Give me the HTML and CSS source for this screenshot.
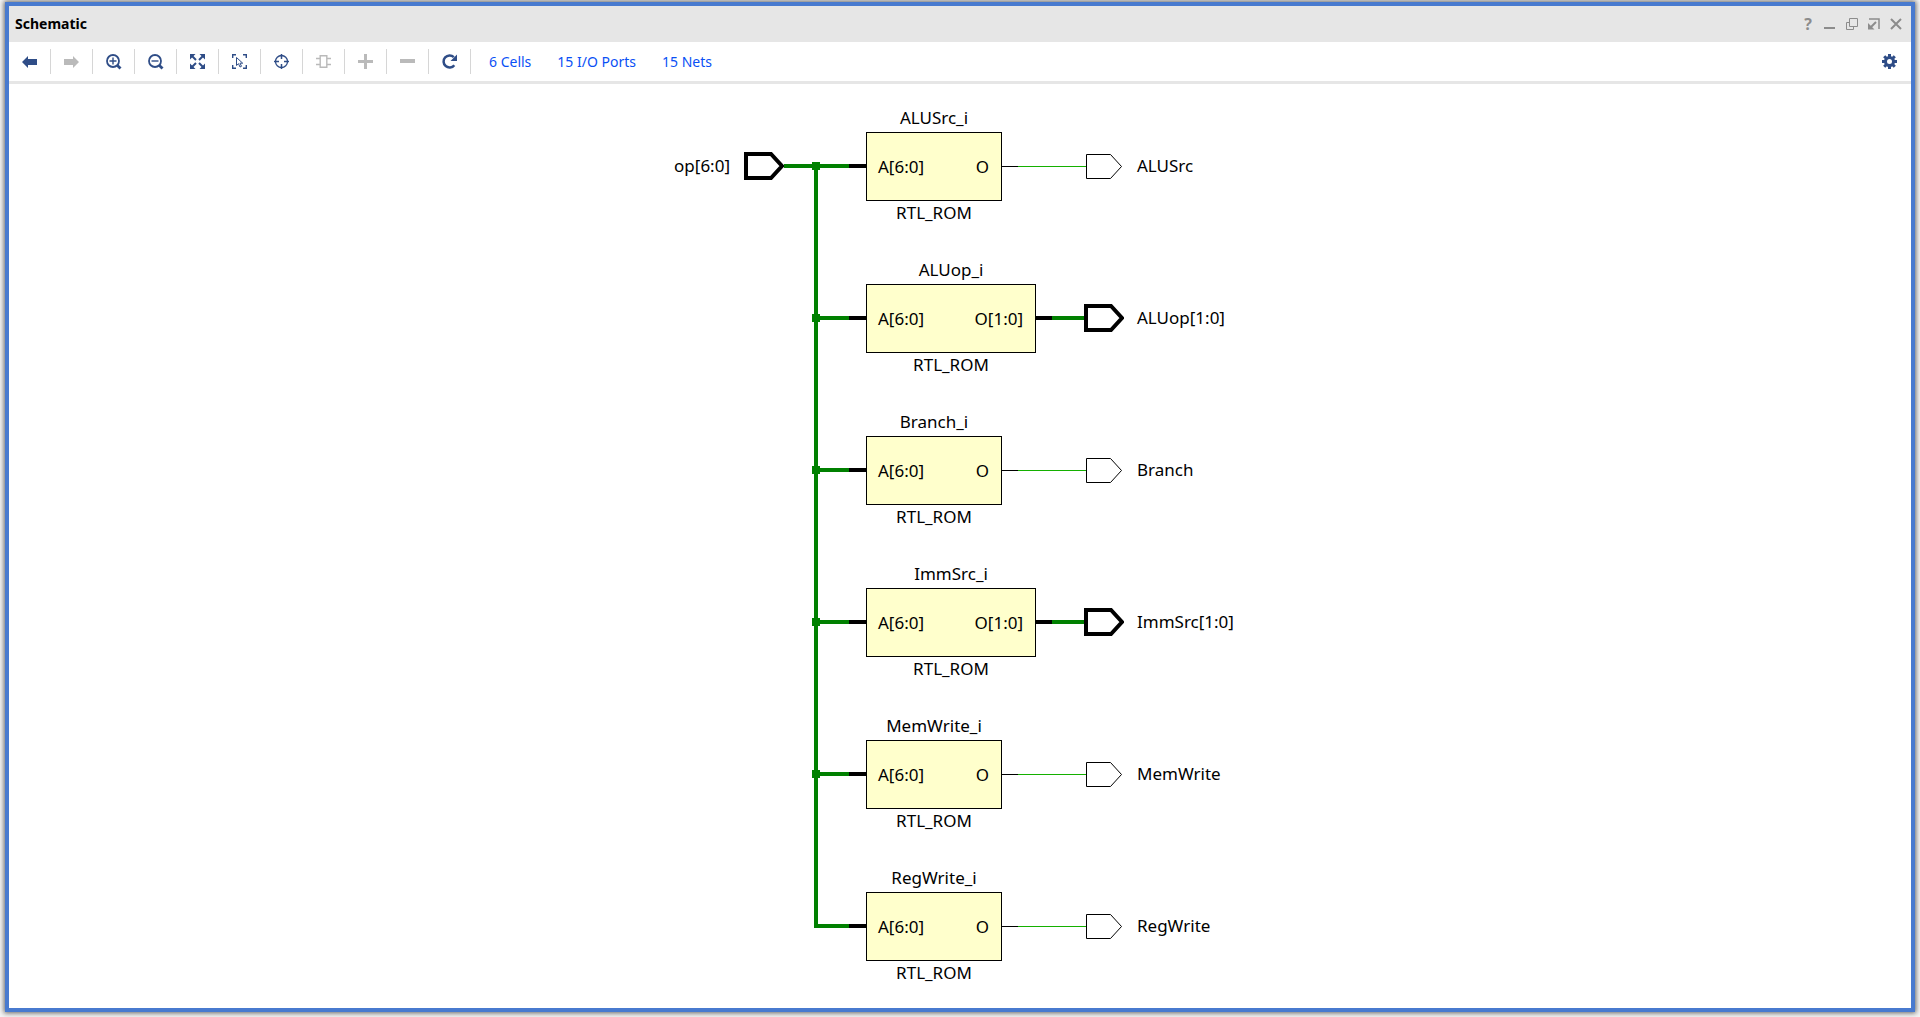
FILE: index.html
```html
<!DOCTYPE html>
<html lang="en">
<head>
<meta charset="utf-8">
<title>Schematic</title>
<link rel="stylesheet" href="styles.css">
</head>
<body>
<svg class="defs" aria-hidden="true">
  <symbol id="port-bus" viewBox="0 0 40 28"><path d="M2 2h25l11 12-11 12H2z" fill="#fff" stroke="#000" stroke-width="4"/></symbol>
  <symbol id="port-net" viewBox="0 0 40 28"><path d="M0 14.5h2" stroke="#14b000"/><path d="M2.500 2.500h24l11 12-11 12h-24z" fill="#fff" stroke="#000"/></symbol>
  <symbol id="tap-first" viewBox="0 0 54 152"><path d="M0 60h37M4 60v92" stroke="#008000" stroke-width="4"/><path d="M0 56h8v8H0z" fill="#008000"/><path d="M37 60h17" stroke="#000" stroke-width="4"/></symbol>
  <symbol id="tap-mid" viewBox="0 0 54 152"><path d="M4 60h33M4 0v152" stroke="#008000" stroke-width="4"/><path d="M0 56h8v8H0z" fill="#008000"/><path d="M37 60h17" stroke="#000" stroke-width="4"/></symbol>
  <symbol id="tap-last" viewBox="0 0 54 120"><path d="M4 0v60h33" fill="none" stroke="#008000" stroke-width="4"/><path d="M37 60h17" stroke="#000" stroke-width="4"/></symbol>
</svg>
<main class="window">
  <header class="titlebar">
    <h1 class="title">Schematic</h1>
    <div class="window-actions">
      <button class="window-button help" aria-label="Help">?</button>
      <button class="window-button" aria-label="Minimize"><svg viewBox="0 0 12 12"><path d="M0 10h11" stroke-width="2"/></svg></button>
      <button class="window-button" aria-label="Restore"><svg viewBox="0 0 12 12"><path d="M3.500 4.500h-3v7h7v-3M3.500.5h8v8h-8z"/></svg></button>
      <button class="window-button" aria-label="Float"><svg viewBox="0 0 12 12"><path d="M1 1h10v10" stroke-width="1.500"/><path d="M8 4 3 9" stroke-width="2"/><path d="M0 5v6.500h6.500z" fill="#8c8c8c" stroke="none"/></svg></button>
      <button class="window-button" aria-label="Close"><svg viewBox="0 0 12 12"><path d="m1 1 10 10M11 1 1 11" stroke-width="2"/></svg></button>
    </div>
  </header>
  <div class="toolbar">
    <button class="tool" aria-label="Back"><svg viewBox="0 0 16 16"><path d="M0 8l6-6v3h9v6H6v3z" fill="currentColor"/></svg></button>
    <button class="tool" aria-label="Forward" disabled><svg viewBox="0 0 16 16"><path d="M15 8 9 2v3H0v6h9v3z" fill="currentColor"/></svg></button>
    <button class="tool" aria-label="Zoom in"><svg viewBox="0 0 16 16" fill="none" stroke="currentColor"><circle cx="7" cy="7" r="6" stroke-width="1.800"/><path d="M3.500 7h7M7 3.500v7" stroke-width="1.400"/><path d="m11.200 11.200 3.300 3.300" stroke-width="2.800"/></svg></button>
    <button class="tool" aria-label="Zoom out"><svg viewBox="0 0 16 16" fill="none" stroke="currentColor"><circle cx="7" cy="7" r="6" stroke-width="1.800"/><path d="M3.500 7h7" stroke-width="1.400"/><path d="m11.200 11.200 3.300 3.300" stroke-width="2.800"/></svg></button>
    <button class="tool" aria-label="Zoom fit"><svg viewBox="0 0 16 16" fill="currentColor"><path d="M0 0h5.500L0 5.500zM15 0H9.500L15 5.500zM0 15h5.500L0 9.500zM15 15H9.500L15 9.500z"/><path d="m2 2 4 4m7-4L9 6m-7 7 4-4m7 4L9 9" stroke="currentColor" stroke-width="2"/></svg></button>
    <button class="tool" aria-label="Zoom to selection"><svg viewBox="0 0 16 16" fill="none" stroke="currentColor"><path d="M.7 4V.7H4M11 .7h3.300V4M.7 11v3.300H4M11 14.300h3.300V11" stroke-width="1.400"/><path d="M4.500 3.500v8l2-1.800 1.500 3.300 1.500-.7L8 9.200h2.700z"/></svg></button>
    <button class="tool" aria-label="Center selection"><svg viewBox="0 0 16 16" fill="none" stroke="currentColor"><circle cx="7.500" cy="7.500" r="6" stroke-width="1.300"/><path d="M7.500 0v5M7.500 10v5M0 7.500h5M10 7.500h5" stroke-width="1.500"/></svg></button>
    <button class="tool" aria-label="Expand cell" disabled><svg viewBox="0 0 16 16" fill="none" stroke="currentColor" stroke-width="1.400"><path d="M4.200 1.700h6.600v11.600H4.200zM0 4.500h4M0 10.500h4M11 4.500h4M11 10.500h4"/></svg></button>
    <button class="tool" aria-label="Add" disabled><svg viewBox="0 0 16 16"><path d="M6 0h3v6h6v3H9v6H6V9H0V6h6z" fill="currentColor"/></svg></button>
    <button class="tool" aria-label="Remove" disabled><svg viewBox="0 0 16 16"><path d="M0 5h15v4H0z" fill="currentColor"/></svg></button>
    <button class="tool" aria-label="Regenerate"><svg viewBox="0 0 16 16"><path d="M12.300 11.200A6 6 0 1 1 11.800 3.200" fill="none" stroke="currentColor" stroke-width="2.500"/><path d="M15 .5v6.500H8.500z" fill="currentColor"/></svg></button>
    <nav class="stats">
      <a href="#cells">6 Cells</a>
      <a href="#ports">15 I/O Ports</a>
      <a href="#nets">15 Nets</a>
    </nav>
    <button class="tool settings" aria-label="Settings"><svg viewBox="0 0 16 16" fill="none" stroke="currentColor"><circle cx="7.500" cy="7.500" r="4" stroke-width="3"/><path d="M7.500 0v3M7.500 12v3M0 7.500h3M12 7.500h3M2.200 2.200l2 2M10.800 10.800l2 2M12.800 2.200l-2 2M4.200 10.800l-2 2" stroke-width="3"/></svg></button>
  </div>
  <section class="canvas" aria-label="Schematic diagram">
    <div class="diagram">
      <div class="input">
        <span>op[6:0]</span>
        <svg class="port"><use href="#port-bus"/></svg>
        <i class="net bus"></i>
      </div>
      <div class="rows">
        <div class="row">
          <svg class="tap"><use href="#tap-first"/></svg>
          <div class="drive">
            <div class="cell"><span class="name">ALUSrc_i</span><div class="rom"><span>A[6:0]</span><span>O</span></div><span class="type">RTL_ROM</span></div>
            <i class="stub"></i><i class="net"></i>
          </div>
          <svg class="port"><use href="#port-net"/></svg><span class="output">ALUSrc</span>
        </div>
        <div class="row">
          <svg class="tap"><use href="#tap-mid"/></svg>
          <div class="drive">
            <div class="cell wide"><span class="name">ALUop_i</span><div class="rom"><span>A[6:0]</span><span>O[1:0]</span></div><span class="type">RTL_ROM</span></div>
            <i class="stub bus"></i><i class="net bus"></i>
          </div>
          <svg class="port"><use href="#port-bus"/></svg><span class="output">ALUop[1:0]</span>
        </div>
        <div class="row">
          <svg class="tap"><use href="#tap-mid"/></svg>
          <div class="drive">
            <div class="cell"><span class="name">Branch_i</span><div class="rom"><span>A[6:0]</span><span>O</span></div><span class="type">RTL_ROM</span></div>
            <i class="stub"></i><i class="net"></i>
          </div>
          <svg class="port"><use href="#port-net"/></svg><span class="output">Branch</span>
        </div>
        <div class="row">
          <svg class="tap"><use href="#tap-mid"/></svg>
          <div class="drive">
            <div class="cell wide"><span class="name">ImmSrc_i</span><div class="rom"><span>A[6:0]</span><span>O[1:0]</span></div><span class="type">RTL_ROM</span></div>
            <i class="stub bus"></i><i class="net bus"></i>
          </div>
          <svg class="port"><use href="#port-bus"/></svg><span class="output">ImmSrc[1:0]</span>
        </div>
        <div class="row">
          <svg class="tap"><use href="#tap-mid"/></svg>
          <div class="drive">
            <div class="cell"><span class="name">MemWrite_i</span><div class="rom"><span>A[6:0]</span><span>O</span></div><span class="type">RTL_ROM</span></div>
            <i class="stub"></i><i class="net"></i>
          </div>
          <svg class="port"><use href="#port-net"/></svg><span class="output">MemWrite</span>
        </div>
        <div class="row">
          <svg class="tap last"><use href="#tap-last"/></svg>
          <div class="drive">
            <div class="cell"><span class="name">RegWrite_i</span><div class="rom"><span>A[6:0]</span><span>O</span></div><span class="type">RTL_ROM</span></div>
            <i class="stub"></i><i class="net"></i>
          </div>
          <svg class="port"><use href="#port-net"/></svg><span class="output">RegWrite</span>
        </div>
      </div>
    </div>
  </section>
</main>
</body>
</html>
```
FILE: styles.css
```css
* { box-sizing: border-box; }

body {
  margin: 0;
  min-height: 100vh;
  display: flex;
  padding: 2px 5px 5px;
  background: #f4f4f4;
  font-family: "Noto Sans", "Open Sans", sans-serif;
  color: #000;
}

button {
  padding: 0;
  border: 0;
  background: none;
  font: inherit;
}

svg { display: block; flex: none; }

.defs { display: none; }

.window {
  flex: 1;
  min-width: 0;
  display: flex;
  flex-direction: column;
  border: 4px solid #487acf;
  background: #fff;
  box-shadow: 0 0 5px 1px rgba(0, 0, 0, 0.6);
}

/* Title bar */
.titlebar {
  display: flex;
  align-items: center;
  justify-content: space-between;
  height: 36px;
  padding: 0 9px 0 6px;
  background: #e6e6e6;
}

.title {
  margin: 0;
  font-size: 14px;
  line-height: 20px;
  font-weight: 700;
}

.window-actions { display: flex; gap: 10px; }

.window-button {
  width: 12px;
  height: 12px;
  color: #8c8c8c;
}

.window-button svg {
  width: 12px;
  height: 12px;
  fill: none;
  stroke: #8c8c8c;
}

.help {
  font-size: 16px;
  line-height: 12px;
  font-weight: 700;
}

/* Toolbar */
.toolbar {
  display: flex;
  align-items: center;
  height: 42px;
  border-bottom: 3px solid #e6e6e6;
}

.tool {
  display: flex;
  align-items: center;
  justify-content: center;
  width: 42px;
  height: 25px;
  border-right: 1px solid #d6d6d6;
  color: #2f4d87;
}

.tool:disabled { color: #bababa; }

.tool svg { width: 16px; height: 16px; }

.settings { border: 0; margin-left: auto; }

.stats {
  display: flex;
  gap: 26px;
  padding-left: 18px;
  font-size: 14px;
  line-height: 20px;
}

.stats a { color: #0a50f5; text-decoration: none; }

/* Diagram */
.canvas {
  flex: 1;
  padding: 22px 20px;
  font-size: 17px;
  line-height: 24px;
}

.diagram {
  display: flex;
  width: 568px;
  margin: 0 auto;
}

.input {
  display: flex;
  align-items: center;
  justify-content: flex-end;
  width: 136px;
  height: 120px;
}

.input .port { margin-left: 14px; }

.input .net { flex: 0 0 28px; }

.rows { flex: 1; }

.row { display: flex; }

.tap { width: 54px; height: 152px; }

.tap.last { height: 120px; }

.drive {
  display: flex;
  align-items: center;
  width: 218px;
  height: 120px;
}

.cell {
  display: flex;
  flex-direction: column;
  width: 136px;
  text-align: center;
}

.cell.wide { width: 170px; }

.name { padding-bottom: 2px; }

.type { padding-bottom: 1px; }

.rom {
  display: flex;
  align-items: center;
  justify-content: space-between;
  height: 69px;
  padding: 0 12px 0 11px;
  border: 1px solid #000;
  background: #ffffcc;
}

.stub { width: 16px; height: 1px; background: #000; }

.net { flex: 1; height: 1px; background: #14b000; }

.stub.bus { height: 4px; }

.net.bus { height: 4px; background: #008000; }

.port { width: 40px; height: 28px; }

.row > .port { margin-top: 46px; }

.output {
  height: 120px;
  padding-left: 13px;
  line-height: 120px;
  white-space: nowrap;
}
```
